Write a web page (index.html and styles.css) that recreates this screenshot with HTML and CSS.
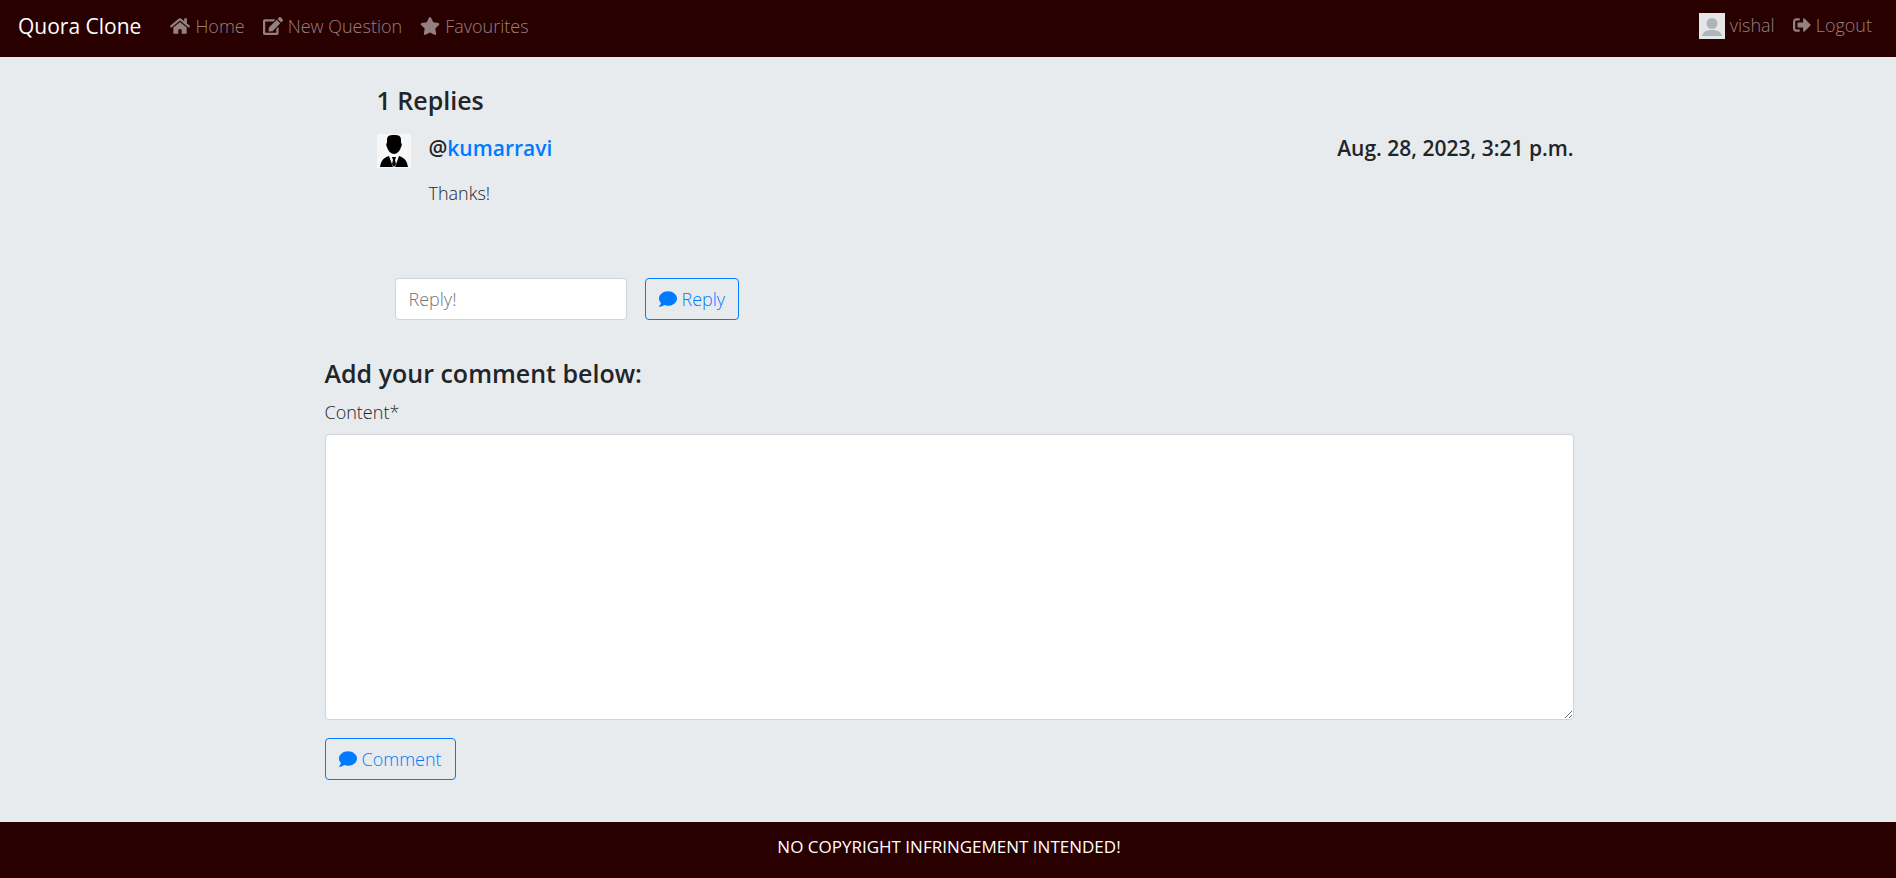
FILE: index.html
```html
<!DOCTYPE html>
<html lang="en">
<head>
<meta charset="utf-8">
<meta name="viewport" content="width=device-width, initial-scale=1">
<title>Quora Clone</title>
<link rel="stylesheet" href="styles.css">
</head>
<body>
<svg class="sprite" aria-hidden="true">
  <symbol id="home" viewBox="0 0 576 512"><path d="M280.37 148.26L96 300.11V464a16 16 0 0 0 16 16l112.06-.29a16 16 0 0 0 15.92-16V368a16 16 0 0 1 16-16h64a16 16 0 0 1 16 16v95.64a16 16 0 0 0 16 16.05L464 480a16 16 0 0 0 16-16V300L295.67 148.26a12.19 12.19 0 0 0-15.3 0zM571.6 251.47L488 182.56V44.05a12 12 0 0 0-12-12h-56a12 12 0 0 0-12 12v72.61L318.47 43a48 48 0 0 0-61 0L4.34 251.47a12 12 0 0 0-1.6 16.9l25.5 31A12 12 0 0 0 45.15 301l235.22-193.74a12.19 12.19 0 0 1 15.3 0L530.9 301a12 12 0 0 0 16.9-1.6l25.5-31a12 12 0 0 0-1.7-16.93z"/></symbol>
  <symbol id="edit" viewBox="0 0 576 512"><path d="M402.6 83.2l90.2 90.2c3.8 3.8 3.8 10 0 13.8L274.4 405.6l-92.8 10.3c-12.4 1.4-22.9-9.1-21.5-21.5l10.3-92.8L388.8 83.2c3.8-3.8 10-3.8 13.8 0zm162-22.9l-48.8-48.8c-15.2-15.2-39.9-15.2-55.2 0l-35.4 35.4c-3.8 3.8-3.8 10 0 13.8l90.2 90.2c3.8 3.8 10 3.8 13.8 0l35.4-35.4c15.2-15.3 15.2-40 0-55.2zM384 346.2V448H64V128h229.8c3.2 0 6.2-1.3 8.5-3.5l40-40c7.6-7.6 2.2-20.5-8.5-20.5H48C21.5 64 0 85.5 0 112v352c0 26.5 21.5 48 48 48h352c26.5 0 48-21.5 48-48V306.2c0-10.7-12.9-16-20.5-8.5l-40 40c-2.2 2.3-3.5 5.3-3.5 8.5z"/></symbol>
  <symbol id="star" viewBox="0 0 576 512"><path d="M259.3 17.8L194 150.2 47.9 171.5c-26.2 3.8-36.7 36.1-17.7 54.6l105.7 103-25 145.5c-4.5 26.3 23.2 46 46.4 33.7L288 439.6l130.7 68.7c23.2 12.2 50.9-7.4 46.4-33.7l-25-145.5 105.7-103c19-18.5 8.5-50.8-17.7-54.6L382 150.2 316.7 17.8c-11.7-23.6-45.6-23.9-57.4 0z"/></symbol>
  <symbol id="logout" viewBox="0 0 512 512"><path d="M497 273L329 441c-15 15-41 4.500-41-17v-96H152c-13.300 0-24-10.700-24-24v-96c0-13.300 10.700-24 24-24h136V88c0-21.400 25.900-32 41-17l168 168c9.300 9.400 9.300 24.600 0 34zM192 436v-40c0-6.600-5.400-12-12-12H96c-17.700 0-32-14.300-32-32V160c0-17.700 14.300-32 32-32h84c6.600 0 12-5.400 12-12V76c0-6.600-5.400-12-12-12H96c-53 0-96 43-96 96v192c0 53 43 96 96 96h84c6.600 0 12-5.400 12-12z"/></symbol>
  <symbol id="comment" viewBox="0 0 512 512"><path d="M256 32C114.600 32 0 125.100 0 240c0 49.600 21.400 95 57 130.700C44.500 421.100 2.700 466 2.200 466.500c-2.200 2.300-2.800 5.700-1.500 8.700S4.800 480 8 480c66.300 0 116-31.800 140.600-51.400 32.700 12.300 69 19.400 107.400 19.400 141.400 0 256-93.100 256-208S397.400 32 256 32z"/></symbol>
</svg>
<header class="navbar">
  <a class="brand" href="#">Quora Clone</a>
  <nav class="nav">
    <a class="nav-link" href="#"><svg class="icon icon-wide"><use href="#home"/></svg>Home</a>
    <a class="nav-link" href="#"><svg class="icon icon-wide"><use href="#edit"/></svg>New Question</a>
    <a class="nav-link" href="#"><svg class="icon icon-wide"><use href="#star"/></svg>Favourites</a>
  </nav>
  <nav class="nav nav-user">
    <a class="nav-link" href="#"><svg class="user-pic" viewBox="0 0 26 26"><path fill="#e4e6e7" d="M0 0h26v26H0z"/><circle cx="13" cy="10.500" r="5.500" fill="#aeb4b7"/><path fill="#aeb4b7" d="M3 23c1-4 4-6 10-6s9 2 10 6z"/></svg>vishal</a>
    <a class="nav-link" href="#"><svg class="icon"><use href="#logout"/></svg>Logout</a>
  </nav>
</header>
<main class="container">
  <section class="replies">
    <h1 class="title">1 Replies</h1>
    <article class="reply">
      <svg class="avatar" viewBox="0 0 34 34"><path fill="#f7f7f7" d="M0 0h34v34H0z"/><path d="M17 1c5 0 7 1 7 5v3c1 0 1 3 0 4-1 4-4 7-7 7s-6-3-7-7c-1-1-1-4 0-4V6c0-4 2-5 7-5zM3 33c1-6 3-9 9-11l4 11zM31 33c-1-6-3-9-9-11l-4 11zM15 23h4l-1 3 1 4-2 3-2-3 1-4z"/></svg>
      <div class="reply-body">
        <div class="reply-head">
          <h2 class="subtitle">@<a class="user-link" href="#">kumarravi</a></h2>
          <time class="subtitle" datetime="2023-08-28T15:21">Aug. 28, 2023, 3:21 p.m.</time>
        </div>
        <p class="reply-text">Thanks!</p>
      </div>
    </article>
    <form class="reply-form">
      <input class="field reply-input" type="text" placeholder="Reply!" aria-label="Reply">
      <button class="btn" type="button"><svg class="icon"><use href="#comment"/></svg>Reply</button>
    </form>
  </section>
  <form class="comment-form">
    <h1 class="title">Add your comment below:</h1>
    <label class="label" for="content">Content*</label>
    <textarea class="field content" id="content"></textarea>
    <button class="btn" type="button"><svg class="icon"><use href="#comment"/></svg>Comment</button>
  </form>
</main>
<footer class="footer">NO COPYRIGHT INFRINGEMENT INTENDED!</footer>
</body>
</html>
```
FILE: styles.css
```css
* { box-sizing: border-box; }
body {
  margin: 0;
  min-height: 100vh;
  display: flex;
  flex-direction: column;
  background: #e8ebee;
  color: #212529;
  font: 300 18px/26px "Open Sans", sans-serif;
}
h1, h2, p { margin: 0; }
a { text-decoration: none; }
.sprite { display: none; }
.icon { width: 18px; height: 18px; margin-right: 5px; vertical-align: -2px; fill: currentColor; }
.icon-wide { width: 20px; }
.navbar {
  display: flex;
  align-items: center;
  height: 57px;
  padding: 0 15px 6px 18px;
  background: #290000;
}
.brand { margin-right: 20px; color: #fff; font-size: 21px; font-weight: 400; }
.nav { display: flex; }
.nav-user { margin-left: auto; }
.nav-link { padding: 0 9px; color: #948080; }
.user-pic { width: 26px; height: 26px; margin-right: 5px; vertical-align: -7px; }
.container { width: 100%; max-width: 1285px; margin: 0 auto; padding: 27px 17px 42px 19px; }
.title { font-size: 25px; line-height: 32px; font-weight: 600; }
.replies { padding-left: 52px; }
.reply { display: flex; gap: 18px; margin-top: 15px; }
.avatar { flex: none; width: 34px; height: 34px; margin-top: 3px; }
.reply-body { flex: 1; }
.reply-head { display: flex; justify-content: space-between; }
.subtitle { font-size: 21px; line-height: 34px; font-weight: 600; }
.user-link { color: #007bff; }
.reply-text { margin-top: 15px; }
.reply-form { display: flex; gap: 18px; margin: 72px 0 37px 18px; }
.field {
  border: 1px solid #ced4da;
  border-radius: 4px;
  padding: 6px 13px;
  background: #fff;
  color: #495057;
  font: inherit;
}
.field::placeholder { color: #6c757d; }
.reply-input { width: 232px; height: 42px; }
.btn {
  height: 42px;
  padding: 0 13px;
  border: 1px solid #007bff;
  border-radius: 4px;
  background: transparent;
  color: #007bff;
  font: inherit;
}
.label { display: block; margin: 10px 0 9px; }
.content { display: block; width: 100%; height: 286px; margin-bottom: 18px; }
.footer {
  flex: 1;
  padding: 12px 0 18px 2px;
  background: #290000;
  color: #fff;
  font-size: 17px;
  font-weight: 400;
  text-align: center;
}
```
